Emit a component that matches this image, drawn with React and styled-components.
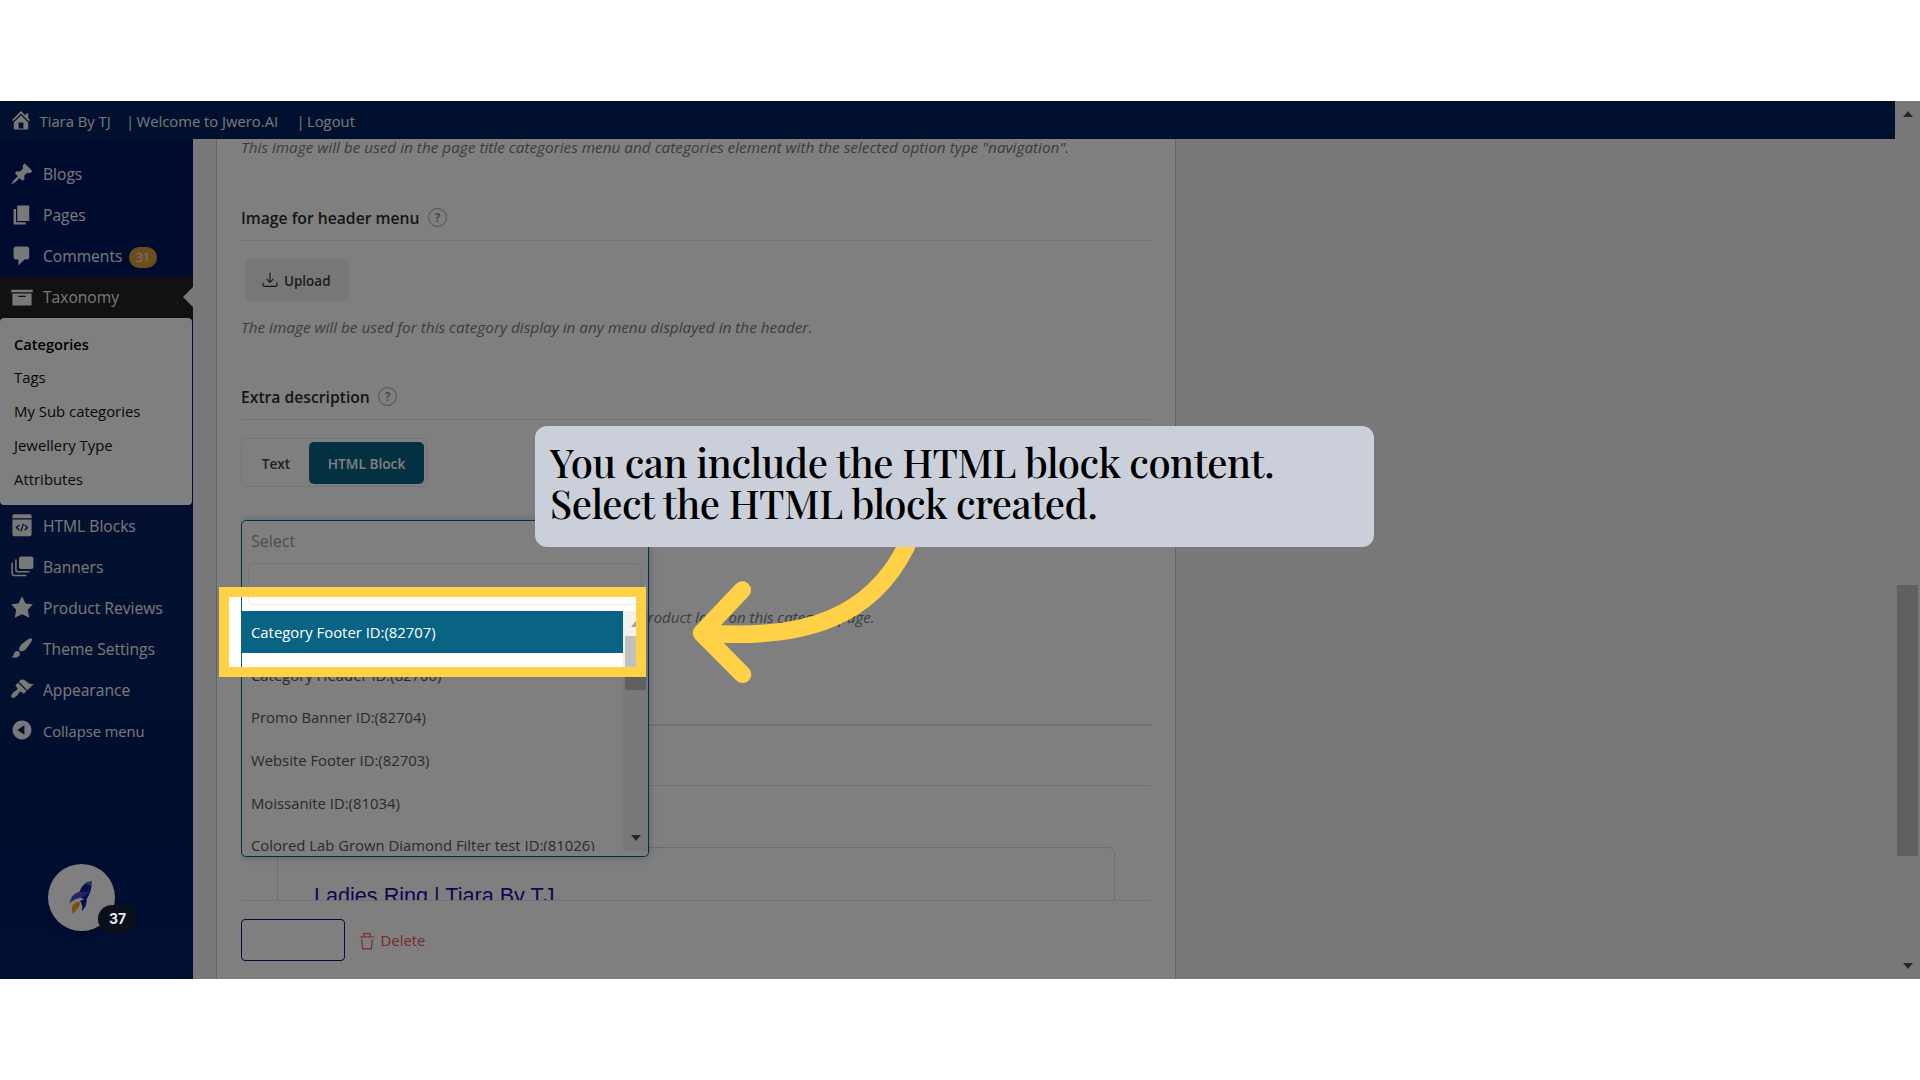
import styled, { createGlobalStyle, css } from "styled-components";

const menuTop = [
    { label: "Blogs", icon: "post" },
    { label: "Pages", icon: "page" },
    { label: "Comments", icon: "comment", count: 31 },
    { label: "Taxonomy", icon: "archive", active: true },
];

const subMenu = ["Categories", "Tags", "My Sub categories", "Jewellery Type", "Attributes"];

const menuBottom = [
    { label: "HTML Blocks", icon: "html" },
    { label: "Banners", icon: "banners" },
    { label: "Product Reviews", icon: "star" },
    { label: "Theme Settings", icon: "brush" },
    { label: "Appearance", icon: "appearance" },
    { label: "Collapse menu", icon: "collapse", small: true },
];

const options = [
    "Category Footer ID:(82707)",
    "Category Header ID:(82706)",
    "Promo Banner ID:(82704)",
    "Website Footer ID:(82703)",
    "Moissanite ID:(81034)",
    "Colored Lab Grown Diamond Filter test ID:(81026)",
];

const icons = {
    home: <path d="M16 8.5l1.53 1.53-1.06 1.06L10 4.6l-6.47 6.49-1.06-1.06L10 2.5l4 4v-2h2v4zm-6-2.46l6 5.99V18H4v-5.97zM12 17v-5H8v5h4z" />,
    post: <path d="M10.44 3.02l1.82-1.82 6.36 6.35-1.83 1.82c-1.05-.68-2.48-.57-3.41.36l-.75.75c-.92.93-1.04 2.35-.35 3.41l-1.83 1.82-2.41-2.41-2.8 2.79c-.42.42-3.38 2.71-3.8 2.29s1.86-3.39 2.28-3.81l2.79-2.79L4.1 9.36l1.83-1.82c1.05.69 2.48.57 3.4-.36l.75-.75c.93-.92 1.05-2.35.36-3.41z" />,
    page: <path d="M6 15V2h10v13H6zm-1 1h8v2H3V5h2v11z" />,
    comment: <path d="M5 2h9c1.1 0 2 .9 2 2v7c0 1.1-.9 2-2 2h-2l-5 5v-5H5c-1.1 0-2-.9-2-2V4c0-1.1.9-2 2-2z" />,
    archive: <path d="M19 4v2H1V4h18zM2 7h16v10H2V7zm11 3V9H7v1h6z" />,
    html: (
        <>
            <path d="M2 1.8q0-1.4 1.4-1.4h13.2q1.4 0 1.4 1.4V3.8H2z" transform="translate(0 .6)" />
            <path fillRule="evenodd" d="M2 5.4h16v12.4q0 1.6-1.6 1.6H3.6Q2 19.4 2 17.8zM7.5 9.5l-3 2.6 3 2.6.7-.8-2-1.8 2-1.8zM12.5 9.5l-.7.8 2 1.8-2 1.8.7.8 3-2.6zM10.7 8.8l-2.2 6.4 1 .3 2.2-6.4z" />
        </>
    ),
    banners: (
        <>
            <rect x="7.5" y="2" width="12" height="10.5" rx="1.6" />
            <path d="M4.9 4.5v8.7q0 1.6 1.6 1.6h9.8M1.8 7v9q0 1.9 1.9 1.9h9.9" fill="none" stroke="currentColor" strokeWidth="1.3" />
        </>
    ),
    star: <path d="M10 1l3 6 6 .75-4.12 4.62L16 19l-6-3-6 3 1.13-6.63L1 7.75 7 7z" />,
    brush: <path d="M18.33 3.57s.27-.8-.31-1.36c-.53-.52-1.22-.24-1.22-.24-.61.3-5.76 3.47-7.67 5.57-.86.96-2.06 3.79-1.09 4.82.92.98 3.96-.17 4.79-1 2.06-2.06 5.21-7.17 5.5-7.79zM1.4 17.65c2.37-1.56 1.46-3.41 3.23-4.64.93-.65 2.22-.62 3.08.29.63.67.8 2.57-.16 3.46-1.57 1.45-4 1.55-6.15.89z" />,
    appearance: <path d="M14.48 11.06L7.41 3.99l1.5-1.5c.5-.56 2.3-.47 3.51.32 1.21.8 1.43 1.28 2.91 2.1 1.18.64 2.45 1.26 4.45.85zm-.71.71L6.7 4.7 4.93 6.47c-.39.39-.39 1.02 0 1.41l1.06 1.06c.39.39.39 1.03 0 1.42-.6.6-1.43 1.11-2.21 1.69-.35.26-.7.53-1.01.84C1.43 14.23.4 16.08 1.4 17.07c.99 1 2.84-.03 4.18-1.36.31-.31.58-.66.85-1.02.57-.78 1.08-1.61 1.69-2.21.39-.39 1.02-.39 1.41 0l1.06 1.06c.39.39 1.02.39 1.41 0z" />,
    collapse: <path fillRule="evenodd" d="M10 2.16c4.33 0 7.84 3.51 7.84 7.84s-3.51 7.84-7.84 7.84S2.16 14.33 2.16 10 5.67 2.16 10 2.16zm2 11.72V6.12L6.18 9.97z" />,
};

const DashIcon = ({ name }) => (
    <Icon viewBox="0 0 20 20" fill="currentColor">
        {icons[name]}
    </Icon>
);

const MenuLink = ({ item, lift }) => (
    <MenuItem $active={item.active} $small={item.small} $lift={lift}>
        <DashIcon name={item.icon} />
        <span>{item.label}</span>
        {item.count && <Count>{item.count}</Count>}
        {item.active && <Notch />}
    </MenuItem>
);

const Title = ({ children }) => (
    <Heading>
        {children}
        <Help>?</Help>
    </Heading>
);

const App = () => {
    return (
        <Screen>
            <GlobalStyle />
            <Stage>
                <Main>
                    <TopBar>
                        <DashIcon name="home" />
                        <TopLink $w={86.5}>Tiara By TJ</TopLink>
                        <Bar>|</Bar>
                        <TopLink $w={160}>Welcome to Jwero.AI</TopLink>
                        <Bar>|</Bar>
                        <TopLink>Logout</TopLink>
                    </TopBar>
                    <Body>
                        <Sidebar>
                            {menuTop.map((item) => (
                                <MenuLink key={item.label} item={item} lift />
                            ))}
                            <SubMenu>
                                {subMenu.map((label, i) => (
                                    <SubItem key={label} $current={i === 0}>{label}</SubItem>
                                ))}
                            </SubMenu>
                            {menuBottom.map((item) => (
                                <MenuLink key={item.label} item={item} />
                            ))}
                            <Launcher>
                                <Rocket />
                            </Launcher>
                        </Sidebar>
                        <Panel>
                            <Fields>
                                <Desc $top={-4} $line={25}>
                                    This image will be used in the page title categories menu and categories element with the selected option type "navigation".
                                </Desc>
                                <Title>Image for header menu</Title>
                                <Upload>
                                    <svg width="16" height="16" viewBox="0 0 16 16" fill="none" stroke="currentColor" strokeWidth="1.2">
                                        <path d="M8 .8v9.4M4.6 6.9L8 10.3l3.4-3.4M1 10.6v1.8q0 2 2 2h10q2 0 2-2v-1.8" />
                                    </svg>
                                    Upload
                                </Upload>
                                <Desc $top={14}>The image will be used for this category display in any menu displayed in the header.</Desc>
                                <Title>Extra description</Title>
                                <Toggle>
                                    <ToggleButton>Text</ToggleButton>
                                    <ToggleButton $on>HTML Block</ToggleButton>
                                </Toggle>
                                <SelectField>
                                    <Dropdown>
                                        <Placeholder>Select</Placeholder>
                                        <Search />
                                        <ListBox>
                                            <List>
                                                {options.map((o, i) => (
                                                    <Option key={o} $selected={i === 0}>{o}</Option>
                                                ))}
                                            </List>
                                            <ListScroll>
                                                <Caret $up $soft />
                                                <Thumb $h={54} />
                                                <Caret $last />
                                            </ListScroll>
                                        </ListBox>
                                    </Dropdown>
                                </SelectField>
                                <Desc $top={43} $left={398} $tight>product loop on this category page.</Desc>
                                <Rule $top={95} $thick />
                                <Rule $top={59} />
                                <Snippet>
                                    <SnippetTitle>Ladies Ring | Tiara By TJ</SnippetTitle>
                                </Snippet>
                            </Fields>
                            <Actions>
                                <SaveButton />
                                <Delete>
                                    <svg width="16" height="18" viewBox="0 0 16 18" fill="none" stroke="currentColor" strokeWidth="1.2">
                                        <path d="M.8 5h14.4M5 4.8V1.5h6v3.3M2.6 7.2l1 9.6h8.8l1-9.6" />
                                    </svg>
                                    Delete
                                </Delete>
                            </Actions>
                        </Panel>
                    </Body>
                </Main>
                <PageScroll>
                    <Caret $up />
                    <Thumb $h={271} $top={468} />
                    <Caret $last />
                </PageScroll>
                <Spotlight />
                <Badge>37</Badge>
                <Arrow viewBox="0 0 240 160">
                    <path d="M235 6L226 26C192 94 128 120 23 112M62.3 69L21.5 112L62.6 153.3" />
                </Arrow>
                <Callout>
                    You can include the HTML block content.
                    <br />
                    Select the HTML block created.
                </Callout>
            </Stage>
        </Screen>
    );
};

const Rocket = () => (
    <svg width="24" height="36" viewBox="0 0 24 36">
        <path d="M22.5 1Q14 2.5 11 10.5L9.5 16l7 4.5Q23.5 12 22.5 1z" fill="#0c1f9e" />
        <path d="M22.5 1q-3 .6-5.5 2.5l4.5 2.5q1-2.5 1-5z" fill="#4a63c8" />
        <path d="M10.5 11.5Q2 14 .5 23.5q4-4.5 10-5.5 7-1.5 10.5-7.5-4 3-10.5 1z" fill="#4b50b4" />
        <path d="M17.5 18q1.5 7-4.5 13 1-6-2-10z" fill="#0c1f9e" />
        <path d="M4.5 24Q8 20.5 11 22.5q0 5-7.5 11.5Q1.5 28.5 4.5 24z" fill="#f0a51c" />
    </svg>
);

const GlobalStyle = createGlobalStyle`
    body{
        margin: 0;
        background-color: white;
        font-family: "Open Sans", "Noto Sans", sans-serif;
    }
    *{
        box-sizing: border-box;
    }
`;

const Screen = styled.div`
    width: 1920px;
    height: 1080px;
    padding-top: 101px;
    overflow: hidden;
`;

const Stage = styled.div`
    position: relative;
    display: flex;
    height: 878px;
    overflow: hidden;
    background-color: #f1f1f1;
`;

const Main = styled.div`
    width: 1895px;
    display: flex;
    flex-direction: column;
`;

const Icon = styled.svg`
    width: 24px;
    height: 24px;
    flex: none;
`;

const TopBar = styled.header`
    flex: none;
    height: 38px;
    display: flex;
    align-items: center;
    padding: 1px 0 0 8.5px;
    background-color: #00205c;
    color: #f0f0f1;
    font-size: 14.8px;
    line-height: 38px;

    & > svg{
        margin-right: 7px;
        margin-top: -1px;
    }
`;

const TopLink = styled.a`
    width: ${(p) => (p.$w ? p.$w + "px" : "auto")};
    white-space: nowrap;
`;

const Bar = styled.span`
    width: 10.5px;
`;

const Body = styled.div`
    flex: 1;
    min-height: 0;
    display: flex;
`;

const Sidebar = styled.nav`
    width: 193px;
    flex: none;
    padding-top: 15px;
    background: linear-gradient(#00185e 0%, #00185e 40%, #0a2060 44%, #06205e 60%, #001c60 80%, #001e66 100%);
    color: #f0f0f1;
`;

const MenuItem = styled.a`
    position: relative;
    height: 41px;
    display: flex;
    align-items: center;
    padding-left: 9.5px;
    font-size: ${(p) => (p.$small ? "14.7px" : "15.6px")};
    background-color: ${(p) => (p.$active ? "#222222" : "transparent")};

    & > svg{
        margin-right: 9.5px;
        margin-top: -2px;
    }

    & > span{
        margin-top: ${(p) => (p.$lift ? -2 : 0)}px;
    }
`;

const Count = styled.b`
    height: 21px;
    margin-left: 7px;
    margin-top: 2px;
    padding: 0 6.5px;
    border-radius: 11px;
    background-color: #d89b3c;
    font-size: 12.5px;
    font-weight: 400;
    line-height: 22px;
`;

const Notch = styled.i`
    position: absolute;
    right: 0;
    top: 10px;
    border: 10px solid transparent;
    border-left: 0;
    border-right: 10px solid #f0f0f1;
`;

const SubMenu = styled.div`
    width: 192px;
    height: 187px;
    padding: 8px 0 0 14px;
    border-radius: 4px;
    background-color: white;
    color: #101010;
`;

const SubItem = styled.a`
    display: block;
    font-size: 14.9px;
    line-height: 34px;
    ${(p) => p.$current && css`
        height: 34px;
        padding-top: 1px;
        font-size: 14.6px;
        font-weight: 600;
        color: black;
    `}
`;

const Launcher = styled.div`
    width: 67px;
    height: 67px;
    margin: 113px 0 0 48px;
    display: flex;
    align-items: center;
    justify-content: center;
    border-radius: 50%;
    background-color: white;
    box-shadow: 0 2px 8px rgba(0,0,0,0.3);

    & > svg{
        margin-left: -2px;
    }
`;

const Badge = styled.span`
    position: absolute;
    left: 98px;
    top: 804px;
    z-index: 3;
    width: 39px;
    height: 28px;
    border-radius: 14px;
    background-color: #0a0f19;
    color: #e4e8f0;
    font-family: Inter, sans-serif;
    font-size: 14px;
    font-weight: 700;
    line-height: 28px;
    text-align: center;
`;

const Panel = styled.section`
    width: 960px;
    margin-left: 23px;
    padding: 0 24px;
    display: flex;
    flex-direction: column;
    border: 1px solid #c3c4c7;
    border-width: 0 1px;
    background-color: white;
`;

const Fields = styled.div`
    height: 761px;
    overflow: hidden;
    white-space: nowrap;
`;

const Desc = styled.p`
    margin: ${(p) => p.$top}px 0 0 ${(p) => p.$left || 0}px;
    color: #757b80;
    font-size: ${(p) => (p.$tight ? "15.05px" : "15.32px")};
    font-style: italic;
    line-height: ${(p) => p.$line || 24}px;
`;

const Heading = styled.h4`
    height: 37px;
    margin: 44px 0 18px;
    padding-bottom: 8px;
    display: flex;
    align-items: center;
    border-bottom: 1px solid #e6e6e6;
    color: #2d2d2d;
    font-size: 15.7px;
    font-weight: 600;
`;

const Help = styled.span`
    width: 19px;
    height: 19px;
    margin-left: 8.5px;
    margin-top: -2px;
    border: 1px solid #a0a0a0;
    border-radius: 50%;
    color: #999999;
    font-size: 11.5px;
    font-weight: 700;
    line-height: 17px;
    text-align: center;
`;

const Upload = styled.button`
    width: 104px;
    height: 42px;
    margin: 0 0 0 4px;
    display: flex;
    align-items: center;
    justify-content: center;
    gap: 5.5px;
    border: 0;
    border-radius: 5px;
    background-color: #efefef;
    color: #3a3a3a;
    font-family: inherit;
    font-size: 13.5px;
    font-weight: 600;
    padding: 2px 1px 0 0;

    & > svg{
        margin-top: -3px;
    }
`;

const Toggle = styled.div`
    width: 186px;
    height: 49px;
    padding: 3px;
    display: flex;
    border: 1px solid #e9e9e9;
    border-radius: 5px;
`;

const ToggleButton = styled.button`
    width: ${(p) => (p.$on ? 115 : 64)}px;
    height: 42px;
    flex: none;
    padding: ${(p) => (p.$on ? "1px 0 0" : "1px 2px 0 0")};
    border: 0;
    border-radius: 5px;
    background-color: ${(p) => (p.$on ? "#096384" : "transparent")};
    color: ${(p) => (p.$on ? "white" : "#3f4347")};
    font-family: inherit;
    font-size: 13.7px;
    font-weight: 600;
`;

const SelectField = styled.div`
    position: relative;
    height: 42px;
    margin-top: 33px;
`;

const Dropdown = styled.div`
    position: absolute;
    top: 0;
    left: 0;
    z-index: 1;
    width: 408px;
    height: 337px;
    border: 1px solid #096384;
    border-radius: 5px;
    background-color: white;
    box-shadow: 0 0 9px rgba(9,99,132,0.35);
`;

const Placeholder = styled.div`
    height: 42px;
    padding-left: 9px;
    color: #999999;
    font-size: 16px;
    line-height: 41px;
`;

const Search = styled.div`
    height: 42px;
    margin: 0 6px;
    border: 1px solid #ebebeb;
    border-radius: 5px;
`;

const ListBox = styled.div`
    height: 240px;
    margin-top: 6px;
    display: flex;
`;

const List = styled.ul`
    width: 381px;
    margin: 0;
    padding: 0;
    overflow: hidden;
    list-style: none;
`;

const Option = styled.li`
    height: 42px;
    margin-bottom: 0.7px;
    padding-left: 9px;
    background-color: ${(p) => (p.$selected ? "#096384" : "white")};
    color: ${(p) => (p.$selected ? "white" : "#50575e")};
    font-size: 14.85px;
    line-height: 42px;
`;

const scrollTrack = css`
    width: 25px;
    display: flex;
    flex-direction: column;
    align-items: center;
    background-color: #f1f1f1;
`;

const ListScroll = styled.div`
    ${scrollTrack}
    padding: 10px 0;
`;

const PageScroll = styled.div`
    ${scrollTrack}
    padding: 10px 0;
`;

const Caret = styled.i`
    width: 0;
    height: 0;
    flex: none;
    margin-top: ${(p) => (p.$last ? "auto" : 0)};
    border: 5.5px solid transparent;
    border-top: ${(p) => (p.$up ? "0" : "6px solid #505050")};
    border-bottom: ${(p) => (p.$up ? `6px solid ${p.$soft ? "#a3a3a3" : "#505050"}` : "0")};
`;

const Thumb = styled.div`
    width: 21px;
    height: ${(p) => p.$h}px;
    flex: none;
    margin-top: ${(p) => p.$top || 9}px;
    background-color: #c1c1c1;
`;

const Rule = styled.hr`
    margin: ${(p) => p.$top}px 0 0;
    border: 0;
    border-top: ${(p) => (p.$thick ? 2 : 1)}px solid #e2e2e2;
`;

const Snippet = styled.div`
    width: 838px;
    height: 120px;
    margin: 61px 0 0 36px;
    padding: 33px 36px;
    border: 1px solid #dadce0;
    border-radius: 6px;
`;

const SnippetTitle = styled.a`
    color: #1a0dab;
    font-family: "Liberation Sans", Arial, sans-serif;
    font-size: 21.6px;
    line-height: 30px;
`;

const Actions = styled.div`
    flex: 1;
    display: flex;
    align-items: flex-start;
    gap: 14px;
    padding-top: 18px;
    border-top: 1px solid #e6e6e6;
`;

const SaveButton = styled.button`
    width: 104px;
    height: 42px;
    border: 1px solid #00206a;
    border-radius: 4px;
    background-color: white;
`;

const Delete = styled.a`
    height: 42px;
    display: flex;
    align-items: center;
    gap: 5.5px;
    color: #f4544f;
    font-size: 14.9px;
    font-weight: 500;

    & > svg{
        margin-top: 1px;
    }
`;

/* dims everything outside the highlighted option */
const Spotlight = styled.div`
    position: absolute;
    left: 219px;
    top: 486px;
    z-index: 2;
    width: 427px;
    height: 90px;
    border: 10px solid #ffd147;
    box-shadow: 0 0 0 2000px rgba(0,0,0,0.5);
`;

const Arrow = styled.svg`
    position: absolute;
    left: 680px;
    top: 420px;
    z-index: 3;
    width: 240px;
    height: 160px;
    overflow: visible;
    fill: none;
    stroke: #ffd147;
    stroke-width: 17.5px;
    stroke-linecap: round;
    stroke-linejoin: round;
`;

const Callout = styled.div`
    position: absolute;
    left: 535px;
    top: 325px;
    z-index: 4;
    width: 838.5px;
    height: 121px;
    padding: 15px;
    border-radius: 12px;
    background-color: #cbcfd9;
    color: black;
    font-family: "Playfair Display", "Liberation Serif", serif;
    font-size: 40px;
    font-weight: 500;
    letter-spacing: -0.5px;
    line-height: 41px;
    white-space: nowrap;
`;

export default App;
